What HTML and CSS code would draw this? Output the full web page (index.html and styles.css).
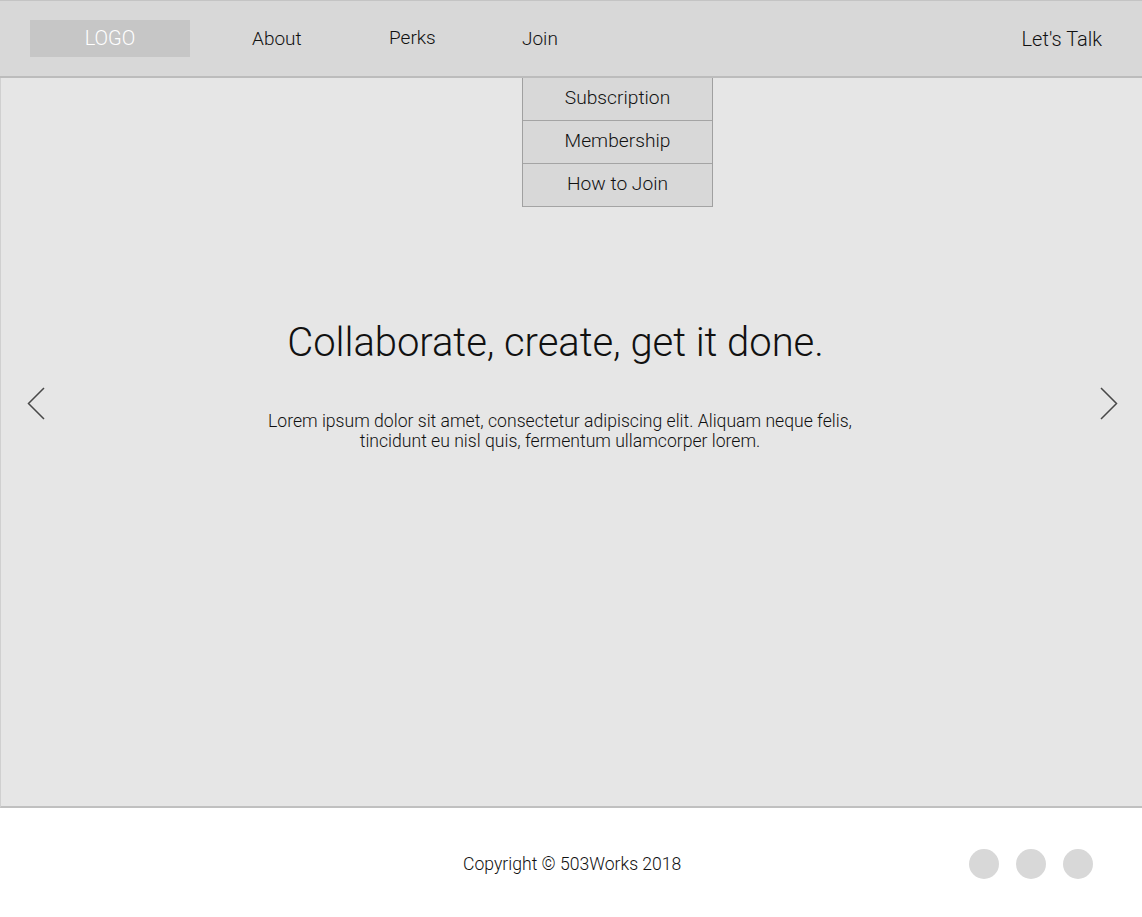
FILE: index.html
```html
<!DOCTYPE html>
<html lang="en">
<head>
  <meta charset="UTF-8">
  <meta name="viewport" content="width=device-width, initial-scale=1.0">
  <title>503Works</title>
  <link rel="stylesheet" href="styles.css">
</head>
<body>

<header class="header">
  <div class="logo">LOGO</div>
  <nav class="nav">
    <a class="nav-link about" href="#">About</a>
    <a class="nav-link perks" href="#">Perks</a>
    <div class="nav-join">
      <a class="nav-link" href="#">Join</a>
      <div class="dropdown">
        <a class="dropdown-item" href="#">Subscription</a>
        <a class="dropdown-item" href="#">Membership</a>
        <a class="dropdown-item" href="#">How to Join</a>
      </div>
    </div>
  </nav>
  <a class="nav-link talk" href="#">Let's Talk</a>
</header>

<main class="hero">
  <svg class="arrow" width="18" height="34" viewBox="0 0 18 34">
    <path d="M17 1 L1.5 16.5 L17 32" fill="none" stroke="#484848" stroke-width="1.5"/>
  </svg>
  <div class="copy">
    <h1 class="title">Collaborate, create, get it done.</h1>
    <p class="text">Lorem ipsum dolor sit amet, consectetur adipiscing elit. Aliquam neque felis,<br>tincidunt eu nisl quis, fermentum ullamcorper lorem.</p>
  </div>
  <svg class="arrow" width="18" height="34" viewBox="0 0 18 34">
    <path d="M1 1 L16.5 16.5 L1 32" fill="none" stroke="#484848" stroke-width="1.5"/>
  </svg>
</main>

<footer class="footer">
  <div class="copyright">Copyright © 503Works 2018</div>
  <div class="social">
    <span class="dot"></span>
    <span class="dot"></span>
    <span class="dot"></span>
  </div>
</footer>

</body>
</html>
```

FILE: styles.css
```css
* {
  box-sizing: border-box;
}

body {
  margin: 0;
  font-family: Roboto, "Liberation Sans", sans-serif;
  font-weight: 300;
  color: #111;
  background-color: #fff;
}

a {
  color: inherit;
  text-decoration: none;
}

.header {
  display: flex;
  align-items: center;
  height: 78px;
  padding: 0 40px 0 30px;
  background-color: #d8d8d8;
  border-top: 1px solid #c4c4c4;
  border-bottom: 2px solid #bcbcbc;
}

.logo {
  width: 160px;
  height: 37px;
  line-height: 37px;
  text-align: center;
  font-size: 20px;
  color: #fff;
  background-color: #c6c6c6;
}

.nav {
  display: flex;
  align-items: center;
  margin-left: 62px;
}

.nav-link {
  font-size: 19px;
  line-height: 24px;
}

.about {
  width: 137px;
}

.perks {
  width: 133px;
  margin-bottom: 2px;
}

.nav-join {
  position: relative;
}

.dropdown {
  position: absolute;
  top: 51.5px;
  left: 0;
  width: 191px;
  background-color: #d8d8d8;
  border-left: 1px solid #a0a0a0;
  border-right: 1px solid #a0a0a0;
  z-index: 2;
}

.dropdown-item {
  display: block;
  height: 43px;
  line-height: 40px;
  text-align: center;
  font-size: 19.2px;
  color: #111;
  border-bottom: 1px solid #a4a4a4;
}

.talk {
  margin-left: auto;
  font-size: 20px;
}

.hero {
  display: flex;
  align-items: center;
  height: 730px;
  padding: 0 24px 76px 26px;
  background-color: #e6e6e6;
  border-left: 1px solid #d0d0d0;
  border-bottom: 2px solid #c0c0c0;
}

.arrow {
  flex: none;
}

.copy {
  flex: 1;
  padding: 0 25px 38px 0;
  text-align: center;
}

.title {
  margin: 0 9px 45px 0;
  font-size: 40px;
  line-height: 47px;
  font-weight: 300;
  letter-spacing: -0.06px;
  color: #111;
}

.text {
  margin: 0;
  font-size: 17.6px;
  line-height: 20px;
  color: #111;
}

.footer {
  display: flex;
  align-items: center;
  height: 109px;
  padding: 3px 49px 0 463px;
}

.copyright {
  font-size: 17.6px;
  color: #111;
}

.social {
  display: flex;
  gap: 16.3px;
  margin-left: auto;
}

.dot {
  width: 30.5px;
  height: 30.5px;
  border-radius: 50%;
  background-color: #d8d8d8;
}
```
